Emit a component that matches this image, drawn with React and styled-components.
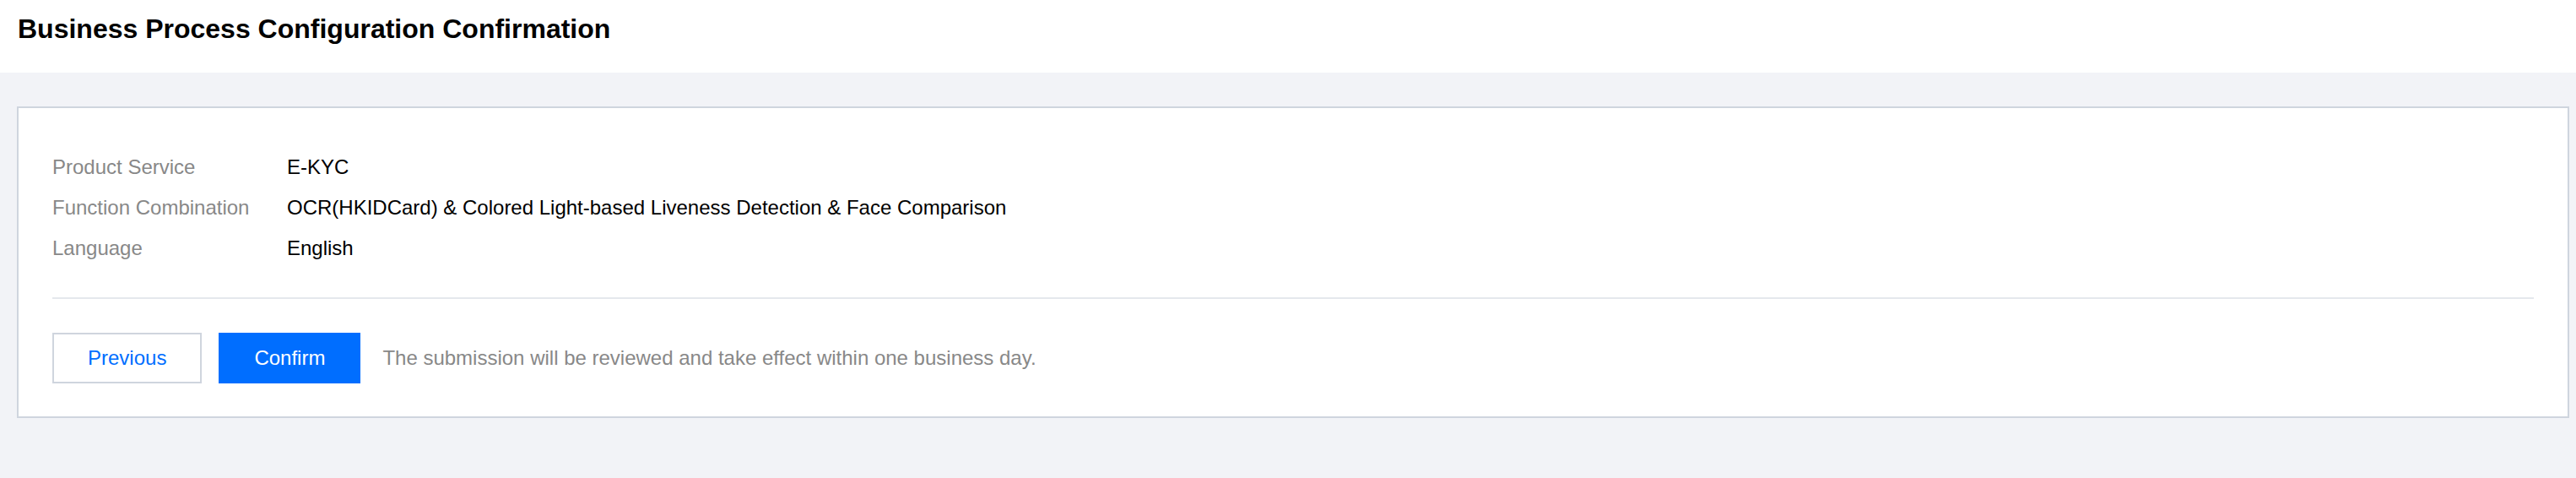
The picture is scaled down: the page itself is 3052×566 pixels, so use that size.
import styled, { createGlobalStyle } from "styled-components";

const GlobalStyle = createGlobalStyle`
    html, body {
        margin: 0;
        padding: 0;
        background: #f2f3f7;
        min-height: 100vh;
        font-family: "Liberation Sans", Arial, Helvetica, sans-serif;
    }
`;

const Colors = {
    blue: "#006eff",
    border: "#cfd5de",
    divider: "#e5e8ed",
    label: "#888888",
    text: "#000000",
    bg: "#f2f3f7"
};

const rows = [
    { label: "Product Service", value: "E-KYC" },
    {
        label: "Function Combination",
        value: "OCR(HKIDCard) & Colored Light-based Liveness Detection & Face Comparison"
    },
    { label: "Language", value: "English" }
];

function App() {
    return (
        <Page>
            <GlobalStyle />
            <Header>
                <Title>Business Process Configuration Confirmation</Title>
            </Header>
            <Content>
                <Card>
                    <InfoList>
                        {rows.map(row => (
                            <InfoRow key={row.label}>
                                <Label>{row.label}</Label>
                                <Value>{row.value}</Value>
                            </InfoRow>
                        ))}
                    </InfoList>
                    <Divider />
                    <Actions>
                        <Button>Previous</Button>
                        <Button primary>Confirm</Button>
                        <Note>
                            The submission will be reviewed and take effect within one business day.
                        </Note>
                    </Actions>
                </Card>
            </Content>
        </Page>
    );
}

const Page = styled.div`
    min-height: 100vh;
    background: ${Colors.bg};
`;

const Header = styled.header`
    box-sizing: border-box;
    height: 86px;
    padding: 17px 21px 0;
    background: #fff;
`;

const Title = styled.h1`
    margin: 0;
    font-size: 32px;
    line-height: 34px;
    font-weight: bold;
    color: ${Colors.text};
`;

const Content = styled.main`
    padding: 40px 8px 40px 20px;
`;

const Card = styled.section`
    background: #fff;
    border: 2px solid ${Colors.border};
    padding: 46px 40px 39px;
`;

const InfoList = styled.div`
    display: flex;
    flex-direction: column;
`;

const InfoRow = styled.div`
    display: grid;
    grid-template-columns: 278px 1fr;
    font-size: 24px;
    line-height: 48px;
`;

const Label = styled.span`
    color: ${Colors.label};
`;

const Value = styled.span`
    color: ${Colors.text};
`;

const Divider = styled.hr`
    margin: 34px 0 40px;
    border: 0;
    height: 2px;
    background: ${Colors.divider};
`;

const Actions = styled.div`
    display: flex;
    align-items: center;
    gap: 20px;
`;

const Button = styled.button`
    box-sizing: border-box;
    height: 60px;
    padding: 0 40px;
    border: 2px solid ${p => (p.primary ? Colors.blue : Colors.border)};
    background: ${p => (p.primary ? Colors.blue : "#fff")};
    color: ${p => (p.primary ? "#fff" : Colors.blue)};
    font-family: inherit;
    font-size: 24px;
    cursor: pointer;
`;

const Note = styled.span`
    margin-left: 6px;
    font-size: 24px;
    color: ${Colors.label};
`;

export default App;
